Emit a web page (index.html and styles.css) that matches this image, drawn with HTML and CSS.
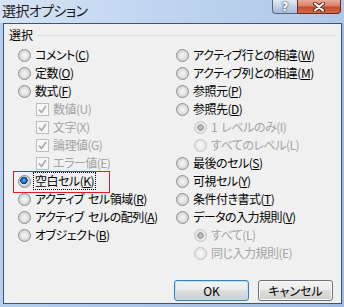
FILE: index.html
```html
<!DOCTYPE html>
<html lang="ja">
<head>
  <meta charset="UTF-8" />
  <title>選択オプション</title>
  <link rel="stylesheet" href="styles.css">
</head>
<body>
  <div class="window">
    <div class="titlebar">
      <span class="title">選択オプション</span>
      <div class="caption-btns">
        <span class="cap help">?</span>
        <span class="cap close">
          <svg width="14" height="10" viewBox="0 0 14 10">
            <path d="M3 1.5 L11 8.5 M11 1.5 L3 8.5" stroke="#5b2116" stroke-width="4" stroke-linecap="round" fill="none"/>
            <path d="M3 1.5 L11 8.5 M11 1.5 L3 8.5" stroke="#fff" stroke-width="2.2" stroke-linecap="round" fill="none"/>
          </svg>
        </span>
      </div>
    </div>

    <div class="client">
      <div class="legend"><span>選択</span></div>

      <div class="cols">
        <div class="col">
          <div class="opt"><span class="radio"></span><span>コメント(<u>C</u>)</span></div>
          <div class="opt"><span class="radio"></span><span>定数(<u>O</u>)</span></div>
          <div class="opt"><span class="radio"></span><span>数式(<u>F</u>)</span></div>
          <div class="opt sub off"><span class="check"><svg width="9" height="9" viewBox="0 0 9 9"><path d="M1 4.5 L3.5 7.5 L8 1" stroke="#a9a9a9" stroke-width="1.6" fill="none"/></svg></span><span>数値(U)</span></div>
          <div class="opt sub off"><span class="check"><svg width="9" height="9" viewBox="0 0 9 9"><path d="M1 4.5 L3.5 7.5 L8 1" stroke="#a9a9a9" stroke-width="1.6" fill="none"/></svg></span><span>文字(X)</span></div>
          <div class="opt sub off"><span class="check"><svg width="9" height="9" viewBox="0 0 9 9"><path d="M1 4.5 L3.5 7.5 L8 1" stroke="#a9a9a9" stroke-width="1.6" fill="none"/></svg></span><span>論理値(G)</span></div>
          <div class="opt sub off"><span class="check"><svg width="9" height="9" viewBox="0 0 9 9"><path d="M1 4.5 L3.5 7.5 L8 1" stroke="#a9a9a9" stroke-width="1.6" fill="none"/></svg></span><span>エラー値(E)</span></div>
          <div class="opt marked"><span class="radio on"></span><span class="focus">空白セル(<u>K</u>)</span></div>
          <div class="opt"><span class="radio"></span><span>アクティブ セル領域(<u>R</u>)</span></div>
          <div class="opt"><span class="radio"></span><span>アクティブ セルの配列(<u>A</u>)</span></div>
          <div class="opt"><span class="radio"></span><span>オブジェクト(<u>B</u>)</span></div>
        </div>

        <div class="col">
          <div class="opt"><span class="radio"></span><span>アクティブ行との相違(<u>W</u>)</span></div>
          <div class="opt"><span class="radio"></span><span>アクティブ列との相違(<u>M</u>)</span></div>
          <div class="opt"><span class="radio"></span><span>参照元(<u>P</u>)</span></div>
          <div class="opt"><span class="radio"></span><span>参照先(<u>D</u>)</span></div>
          <div class="opt sub off"><span class="radio on"></span><span>1 レベルのみ(I)</span></div>
          <div class="opt sub off"><span class="radio"></span><span>すべてのレベル(L)</span></div>
          <div class="opt"><span class="radio"></span><span>最後のセル(<u>S</u>)</span></div>
          <div class="opt"><span class="radio"></span><span>可視セル(<u>Y</u>)</span></div>
          <div class="opt"><span class="radio"></span><span>条件付き書式(<u>T</u>)</span></div>
          <div class="opt"><span class="radio"></span><span>データの入力規則(<u>V</u>)</span></div>
          <div class="opt sub off"><span class="radio on"></span><span>すべて(L)</span></div>
          <div class="opt sub off"><span class="radio"></span><span>同じ入力規則(E)</span></div>
        </div>
      </div>

      <div class="footer">
        <button class="btn default">OK</button>
        <button class="btn">キャンセル</button>
      </div>
    </div>
  </div>
</body>
</html>
```

FILE: styles.css
```css
* {
  box-sizing: border-box;
}

body {
  margin: 0;
  width: 344px;
  height: 307px;
  overflow: hidden;
  font-family: "Noto Sans CJK JP", "Liberation Sans", sans-serif;
  font-size: 12px;
  font-feature-settings: "palt";
  color: #000;
}

.window {
  height: 307px;
  display: flex;
  flex-direction: column;
  background: linear-gradient(to right, #b5cdec, #a9c3e6 60%, #9fbbe3);
}

.titlebar {
  height: 23px;
  display: flex;
  justify-content: space-between;
  align-items: flex-start;
  background: linear-gradient(to right, #d6e4f5, #c0d5ef 45%, #aec8ea);
}

.title {
  font-size: 14px;
  line-height: 20px;
  padding-left: 2px;
  letter-spacing: -0.6px;
  color: #1a1a1a;
}

.caption-btns {
  display: flex;
  margin-right: 3px;
}

.cap {
  height: 14px;
  display: flex;
  align-items: center;
  justify-content: center;
  border: 1px solid #56698a;
  border-top: none;
}

.help {
  width: 25px;
  border-right: none;
  border-radius: 0 0 0 4px;
  background: linear-gradient(#e2eaf5, #c2d0e6 50%, #a9bbd8);
  color: #fff;
  font: bold 12px "DejaVu Sans", sans-serif;
  text-shadow: 0 0 2px #2d3f5e, 0 0 1px #2d3f5e;
}

.close {
  width: 44px;
  border-color: #6e2c20;
  border-radius: 0 0 4px 0;
  background: linear-gradient(#e9ab9a, #d98069 45%, #c64a2e 55%, #d56a45);
}

.client {
  flex: 1;
  margin: 0 2px 3px 3px;
  border: 1px solid #3f5373;
  background: #f0f0f0;
  padding-top: 2px;
}

.legend {
  height: 18px;
  display: flex;
  align-items: center;
  padding: 0 4px 0 5px;
  line-height: 18px;
}

.legend::after {
  content: "";
  flex: 1;
  height: 1px;
  margin-left: 4px;
  background: #d5dfe5;
}

.cols {
  display: grid;
  grid-template-columns: 158px 1fr;
  margin-top: 2px;
  padding-left: 14px;
}

.opt {
  height: 18px;
  display: flex;
  align-items: center;
  gap: 4px;
  line-height: 16px;
  letter-spacing: -0.5px;
  word-spacing: 2px;
  white-space: nowrap;
}

.opt.sub {
  padding-left: 18px;
}

.opt.off {
  color: #a3a3a3;
}

u {
  text-underline-offset: 1px;
}

.radio {
  width: 13px;
  height: 13px;
  flex: none;
  border-radius: 50%;
  border: 1px solid #8d8d8d;
  background: radial-gradient(circle, #f7f7f7 0, #e6e6e6 3px, #cfcfcf 6px);
}

.radio.on {
  background: radial-gradient(circle at 45% 40%, #6fc0f6 0, #1c6fc9 2px, #0d3f8c 3.5px, #dcdcdc 4px, #cfcfcf 6px);
}

.off .radio {
  border-color: #c4c4c4;
  background: radial-gradient(circle, #fbfbfb 0, #f0f0f0 3px, #e2e2e2 6px);
}

.off .radio.on {
  background: radial-gradient(circle, #c8c8c8 0, #9c9c9c 3px, #ececec 3.6px, #e2e2e2 6px);
}

.check {
  width: 13px;
  height: 13px;
  flex: none;
  display: flex;
  align-items: center;
  justify-content: center;
  border: 1px solid #bcbcbc;
  background: #f7f7f7;
}

.marked {
  position: relative;
}

.marked::after {
  content: "";
  position: absolute;
  left: -5px;
  top: -1px;
  width: 95px;
  height: 20px;
  border: 1px solid #e02020;
}

.focus {
  outline: 1px dotted #000;
  padding: 0 1px;
  margin-left: -1px;
}

.footer {
  display: flex;
  justify-content: flex-end;
  gap: 9px;
  margin-top: 18px;
  padding-right: 8px;
}

.btn {
  width: 75px;
  height: 21px;
  padding: 0;
  border: 1px solid #707070;
  border-radius: 3px;
  background: linear-gradient(#f2f2f2, #ebebeb 50%, #dddddd 50%, #cfcfcf);
  font: inherit;
  color: #000;
  box-shadow: inset 0 0 0 1px #fafafa;
}

.btn.default {
  border-color: #3c7fb1;
  box-shadow: inset 0 0 0 1px #b8e4f8;
}
```
